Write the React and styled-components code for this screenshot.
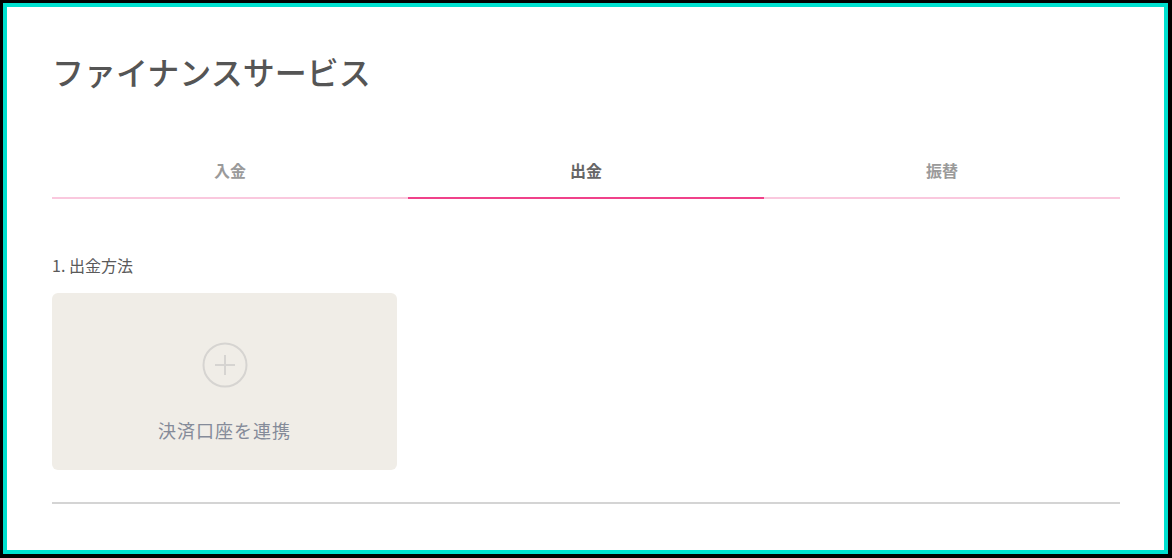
import React, { useState } from "react";
import styled, { createGlobalStyle } from "styled-components";

const Global = createGlobalStyle`
  html, body { margin: 0; padding: 0; background: #000; }
  body { font-family: "Noto Sans CJK JP", "Noto Sans", sans-serif; }
  * { box-sizing: border-box; }
`;

const Frame = styled.div`
  width: 1172px;
  height: 558px;
  padding: 3px 4px 4px 3px;
  background: #000;
`;

const Panel = styled.div`
  height: 100%;
  border: 4px solid #00e0cf;
  background: #fff;
  padding: 40px 44px 0 45px;
  display: flex;
  flex-direction: column;
`;

const Title = styled.h1`
  margin: 0;
  font-size: 32px;
  line-height: 48px;
  font-weight: 500;
  color: #555555;
`;

const Tabs = styled.div`
  margin-top: 63px;
  display: grid;
  grid-template-columns: repeat(3, 1fr);
`;

const Tab = styled.button`
  appearance: none;
  background: none;
  border: none;
  border-bottom: 2px solid ${(p) => (p.$active ? "#f0418a" : "#fac8de")};
  padding: 0 0 15px;
  font-family: inherit;
  font-size: 16px;
  line-height: 24px;
  font-weight: 700;
  color: ${(p) => (p.$active ? "#666666" : "#9a9a9a")};
  cursor: pointer;
`;

const Section = styled.div`
  margin-top: 56px;
  display: flex;
  flex-direction: column;
`;

const Label = styled.div`
  font-size: 16px;
  line-height: 20px;
  color: #5a5a5a;
`;

const Card = styled.button`
  appearance: none;
  border: none;
  margin-top: 18px;
  width: 345px;
  height: 177px;
  border-radius: 6px;
  background: #f0ede7;
  display: flex;
  flex-direction: column;
  align-items: center;
  padding-top: 49px;
  font-family: inherit;
  cursor: pointer;
`;

const CardText = styled.span`
  margin-top: 29px;
  font-size: 18px;
  line-height: 26px;
  letter-spacing: 1px;
  color: #858b99;
`;

const Divider = styled.hr`
  margin: 32px 0 0;
  border: none;
  height: 2px;
  background: #d4d4d4;
`;

const PlusIcon = () => (
  <svg width="46" height="46" viewBox="0 0 46 46" fill="none">
    <circle cx="23" cy="23" r="21.5" stroke="#d6d4d1" strokeWidth="2" />
    <path d="M23 13v20M13 23h20" stroke="#d6d4d1" strokeWidth="2" />
  </svg>
);

export default function App() {
  const [tab, setTab] = useState(1);
  const tabs = ["入金", "出金", "振替"];
  return (
    <>
      <Global />
      <Frame>
        <Panel>
          <Title>ファイナンスサービス</Title>
          <Tabs>
            {tabs.map((t, i) => (
              <Tab key={t} $active={i === tab} onClick={() => setTab(i)}>
                {t}
              </Tab>
            ))}
          </Tabs>
          <Section>
            <Label>1. 出金方法</Label>
            <Card>
              <PlusIcon />
              <CardText>決済口座を連携</CardText>
            </Card>
          </Section>
          <Divider />
        </Panel>
      </Frame>
    </>
  );
}
